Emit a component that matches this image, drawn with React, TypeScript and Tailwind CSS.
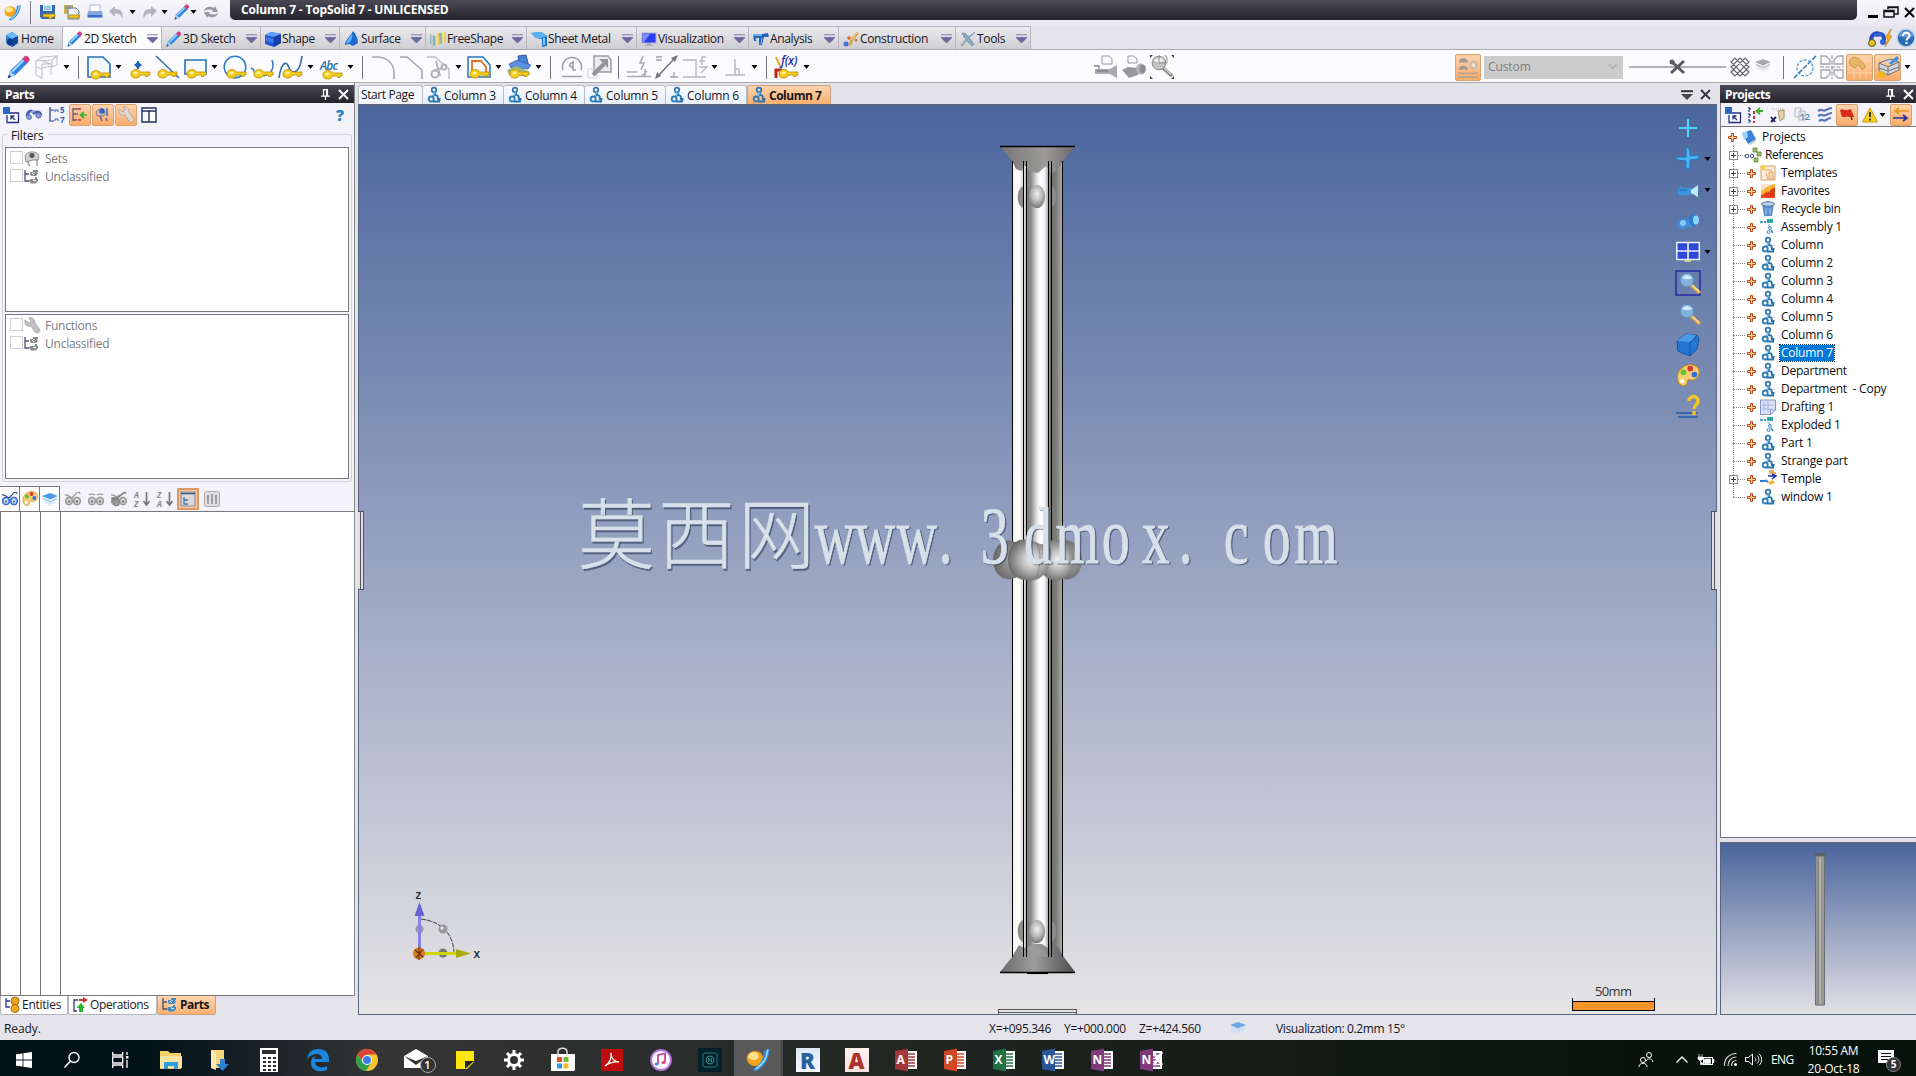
import React from 'react';

type SvgProps = { c?: string; vb?: string; children?: React.ReactNode };

const Svg = ({ c = 'w-6 h-6', vb = '0 0 24 24', children }: SvgProps) => (
  <svg className={`${c} shrink-0 overflow-visible`} viewBox={vb} fill="none">
    {children}
  </svg>
);

const S16 = ({ c = 'w-4 h-4', children }: SvgProps) => (
  <Svg c={c} vb="0 0 16 16">{children}</Svg>
);

/* ---------- small shared drawings ---------- */

const Arrow = ({ c = '' }: { c?: string }) => (
  <svg className={`w-[7px] h-1 shrink-0 ${c}`} viewBox="0 0 7 4">
    <path d="M0.5 0h6L3.5 4z" fill="#000" />
  </svg>
);

const Sep = ({ c = '' }: { c?: string }) => <div className={`w-px h-[23px] shrink-0 bg-[#77777c] ${c}`} />;

const Key = ({ x = 4, y = 14 }: { x?: number; y?: number }) => (
  <g transform={`translate(${x} ${y})`}>
    <path d="M0 5C0 1.5 3 .5 5 .5 7.500.5 9 2 9.500 3H19v3h-2v1.500h-2.500V6H9.500C9 8 7 9 5 9 2 9 0 8 0 5z" fill="#f5cc1a" stroke="#b98d06" strokeWidth=".8" />
    <ellipse cx="4.500" cy="4" rx="2.200" ry="1.500" fill="#fff3a0" />
  </g>
);

const Pencil = ({ c = 'w-4 h-4' }: { c?: string }) => (
  <S16 c={c}>
    <path d="M.5 15.500L2 10.500 11 2l3 3-8.500 8.500z" fill="#2f86e0" />
    <path d="M3 10.500l8-8 1 1-8 8z" fill="#a4d8ff" />
    <path d="M10 2.500L12 .6c1-.8 4 1.800 3 3L13.200 5.500z" fill="#d8387e" />
    <path d="M.5 15.500L2 10.500l1.200.4.3 1.400 1.300.4.200 1.200z" fill="#9fd3f2" />
    <path d="M.5 15.500l.8-2.300 1.500 1.500z" fill="#1d2c68" />
  </S16>
);

const Part = ({ c = 'w-4 h-4' }: { c?: string }) => (
  <S16 c={c}>
    <circle cx="8" cy="3" r="2.300" stroke="#2b74b2" strokeWidth="1.700" />
    <path d="M8.500 5v4" stroke="#3b92cf" strokeWidth="3.200" />
    <circle cx="5.200" cy="12" r="2.500" stroke="#2f80bd" strokeWidth="1.900" />
    <path d="M6.500 9c4-2 6 0 5 2.500M7 14.500h6l.5-2.500H11" stroke="#2873ae" strokeWidth="1.900" />
    <path d="M8 5.500L7.500 9" stroke="#9ad0f2" strokeWidth="1" />
  </S16>
);

const TopSolid = ({ c = 'w-4 h-4' }: { c?: string }) => (
  <S16 c={c}>
    <ellipse cx="6" cy="7" rx="5.500" ry="5" fill="#f5a21c" />
    <ellipse cx="5" cy="5.500" rx="3.500" ry="2.600" fill="#ffe28a" />
    <path d="M15.500.5c.5 5-2.500 12-9 15-1.500 0-2-1-1-2C10 11 12 6 12 2z" fill="#2f8fdc" />
    <path d="M14.500 1c-.5 5-3 10-8 13" stroke="#a5dafa" strokeWidth="1" />
  </S16>
);

const CloseX = ({ color = '#fff' }: { color?: string }) => (
  <svg className="w-[11px] h-[11px]" viewBox="0 0 11 11"><path d="M1 1l9 9M10 1l-9 9" stroke={color} strokeWidth="1.900" /></svg>
);

const Pin = () => (
  <svg className="w-[9px] h-[11px]" viewBox="0 0 9 11"><path d="M2.500 7V.7h4V7M5.500.5V7M0 7.200h9M4.500 7v4" stroke="#fff" fill="none" strokeWidth="1.200" /></svg>
);

const TreeMini = ({ color }: { color: string }) => (
  <S16>
    <path d="M1 1v11h4M1 5h4" stroke="#4a5070" strokeWidth="1.300" />
    <path d="M6 3h7l1 2-2 2H7L6 5zM6 10h8v2l-2 2.500H7L5 12z" fill={color} />
    <path d="M8 4l2 2M9 11l3 1M10 1v3M8 9l4-1" stroke="#fff" strokeWidth="1" />
    <path d="M9 2h5M12 8v3" stroke={color} strokeWidth="2" />
  </S16>
);

const Goggles = ({ gray, variant = 0 }: { gray?: boolean; variant?: number }) => (
  <S16>
    <path d={variant === 1 ? 'M1 4c2-2 4-1 6 0M9 4c2-1 4-2 6 0' : 'M0 4c3-1 4 2 7 3l3-3c2-4 5-3 5-1'} stroke={gray ? '#8a8a8a' : '#24398e'} strokeWidth="1.100" />
    <ellipse cx="4" cy="10" rx="3.600" ry="4" fill={gray ? '#b4b4b4' : '#6d9bf4'} stroke={gray ? '#929292' : '#3060cc'} />
    <ellipse cx="12" cy="10" rx="3.600" ry="4" fill={gray ? '#b4b4b4' : '#6d9bf4'} stroke={gray ? '#929292' : '#3060cc'} />
    <ellipse cx="4" cy="10" rx="2" ry="2.600" fill={gray ? '#d9d9d9' : '#d5e8ff'} />
    <ellipse cx="12" cy="10" rx="2" ry="2.600" fill={gray ? '#d9d9d9' : '#d5e8ff'} />
    <circle cx="4" cy="10.500" r=".9" fill="#444" />
    <circle cx="12" cy="10.500" r=".9" fill="#444" />
    {variant === 2 && <path d="M0 7l5 1 10-7M1 8h7v6l-4 1z" stroke="#7d7d7d" fill="#999" />}
  </S16>
);

const Palette = ({ c = 'w-4 h-4' }: { c?: string }) => (
  <S16 c={c}>
    <path d="M1 9C1 4 5 .5 10 .5c4 0 5.800 3 5.500 5.500-.4 4-4 5-6 4.500-2-.4-2 1-2 2C7 15.500 1 15.500 1 9z" fill="#f6cf72" stroke="#c48a25" strokeWidth=".7" />
    <circle cx="5" cy="5.500" r="1.900" fill="#5fc22e" />
    <circle cx="9.500" cy="3" r="1.900" fill="#d63434" />
    <circle cx="12.300" cy="7" r="1.900" fill="#2f6be0" />
    <circle cx="4.200" cy="11.500" r="1.400" fill="#fff" />
  </S16>
);

const Layer = ({ color = '#4f97e8', light = '#a9d2fb' }: { color?: string; light?: string }) => (
  <S16>
    <path d="M1 9l7 3 7-3-1 3-6 3-6-3z" fill={light} opacity=".35" />
    <path d="M0 5l8-3 8 3-8 3.500z" fill={color} />
    <path d="M1 6.500l7 3 7-3v2L8 12 1 8.500z" fill={light} />
  </S16>
);

const Magnifier = ({ gray }: { gray?: boolean }) => (
  <g>
    <path d="M13 13l9 8" stroke={gray ? '#888' : '#e0a544'} strokeWidth="3.600" />
    <path d="M14 13l7 6.500" stroke={gray ? '#d0d0d0' : '#ffe4a4'} strokeWidth="1.300" />
    <circle cx="9" cy="8" r="6.800" fill={gray ? '#c2c2c2' : '#81b2da'} stroke={gray ? '#8a8a8a' : '#5d8cb9'} />
    <path d="M4 6c2-4 8-4 10 0-3 1.500-6 2-10 0z" fill={gray ? '#eee' : '#d2ebfa'} />
  </g>
);

const PanelBtn = () => (
  <S16>
    <path d="M4 6h11.500v9.500H4V8" stroke="#232e80" strokeWidth="1.300" fill="#fff" />
    <rect x="0" y="0" width="7" height="7" fill="#2a68c8" />
    <path d="M12 13L8 9m0 3.500V9h3.500" stroke="#232e80" strokeWidth="1.300" />
  </S16>
);

const Binoc = () => (
  <S16>
    <path d="M1 9C2 3 6 3 8 6c3-2 6-1 7 2" stroke="#4560ac" strokeWidth="3" />
    <circle cx="3" cy="10" r="2.500" fill="#8a9acb" stroke="#4560ac" strokeWidth=".7" />
    <circle cx="12.500" cy="8.500" r="2.700" fill="#8a9acb" stroke="#4560ac" strokeWidth=".7" />
    <path d="M5 5l4-1" stroke="#9eb3e4" strokeWidth="2" />
  </S16>
);

const HOT = 'flex shrink-0 items-center justify-center border border-[#d9a070] bg-linear-to-b from-[#fdd3ab] to-[#f9ac68] rounded-[2px]';

/* ---------- title bar ---------- */

const TitleBar = () => (
  <div className="flex h-[26px] shrink-0 bg-linear-to-b from-[#f8f8fb] to-[#e9e8f2]">
    <div className="flex w-[230px] h-6 items-center">
      <TopSolid c="w-[17px] h-[17px] ml-1" />
      <Sep c="ml-[9px]" />
      <S16 c="w-4 h-4 ml-[9px]">
        <path d="M0 1h15v14H2L0 13z" fill="#3568b4" />
        <path d="M3 1h9v6H3z" fill="#d6eafa" /><path d="M4 3h7M4 5h7" stroke="#6aa0d3" />
        <path d="M3 10h12v3h-3v2H9v-2H3z" fill="#f3c91d" stroke="#9d7a0a" strokeWidth=".7" />
      </S16>
      <S16 c="w-4 h-4 ml-2">
        <path d="M0 1h9v9H0z" fill="#c9b24b" /><path d="M4 4h8l3 3v8H4z" fill="#e8eef3" stroke="#6d7c86" />
        <path d="M1 2h6v3H1z" fill="#8796a0" /><path d="M5 11h10v3H5z" fill="#f3c91d" stroke="#9d7a0a" strokeWidth=".7" />
      </S16>
      <S16 c="w-4 h-4 ml-[7px]">
        <path d="M3 1h10v7H3z" fill="#fff" stroke="#9fb6dc" />
        <path d="M1 7h14l1 5-1 2H1l-1-2z" fill="#87a5e0" /><path d="M1 11h14v2H1z" fill="#3e6bc5" />
      </S16>
      <S16 c="w-4 h-4 ml-1.5"><path d="M0 7l6-5v3c6 0 9 3 7 10-.5-4-3-5.500-7-5.500V13z" fill="#b4b4ba" /></S16>
      <Arrow c="ml-1" />
      <S16 c="w-4 h-4 ml-[5px]"><path d="M16 7l-6-5v3C4 5 1 8 3 15c.5-4 3-5.500 7-5.500V13z" fill="#b4b4ba" /></S16>
      <Arrow c="ml-1" />
      <div className="ml-1.5"><Pencil /></div>
      <Arrow c="" />
      <S16 c="w-4 h-4 ml-1.5">
        <path d="M1 7c1-5 7-5 10-3l1-2 3 6H9l1-1.500C7 5 4 5 1 7zM15 9c-1 5-7 5-10 3l-1 2-3-6h6l-1 1.500c3 1.500 6 1.500 9-.5z" fill="#98989f" />
      </S16>
    </div>
    <div className="flex h-5 w-[1627px] bg-linear-to-b from-[#4b4955] to-[#25232c] rounded-b-[5px] pl-[11px]">
      <span className="text-white text-xs font-bold leading-5 tracking-[-0.17px] whitespace-nowrap">Column 7 - TopSolid 7 - UNLICENSED</span>
    </div>
    <div className="flex items-center pl-[11px] gap-[5px] -mt-[2px]">
      <svg className="w-[10px] h-[14px]" viewBox="0 0 10 14"><path d="M0 11.500h10" stroke="#000" strokeWidth="3" /></svg>
      <svg className="w-4 h-3" viewBox="0 0 16 12"><path d="M5 3V1h10v7h-4M1 4.500h10V11H1zM1 5.500h10M5 1.500h10" stroke="#111" fill="none" strokeWidth="1.500" /></svg>
      <CloseX color="#000" />
    </div>
  </div>
);

/* ---------- ribbon tabs ---------- */

const CubeIcon = () => (
  <S16>
    <path d="M0 4l6-3 10 2v9l-7 4-9-3z" fill="#1f57cf" />
    <path d="M0 4l6-3 10 2-7 3z" fill="#62a2ff" /><path d="M9 6l7-3v9l-7 4z" fill="#1840a8" /><path d="M1 6l7 2v4l-7-2z" fill="#3e7cf0" />
  </S16>
);

const ribbon = [
  { n: 'Home', w: 'w-[63px]', i: <S16><path d="M2 4l6-3 6 4v7l-6 4-6-4z" fill="#2c7ed4" /><path d="M2 4l6-3 6 4-6 3z" fill="#6fbaf5" /><path d="M8 8l6-3v7l-6 4z" fill="#11479a" /><ellipse cx="6" cy="11" rx="3" ry="3.500" fill="#0d3a8a" /></S16> },
  { n: '2D Sketch', w: 'w-[99px]', i: <Pencil /> },
  { n: '3D Sketch', w: 'w-[99px]', i: <Pencil /> },
  { n: 'Shape', w: 'w-[79px]', i: <CubeIcon /> },
  { n: 'Surface', w: 'w-[86px]', i: <S16><path d="M9 0c3 3 5 8 5 12l-5 3-4-2-4 1c0-5 5-8 8-14z" fill="#1c68cf" /><path d="M8 2c-2 5-5 6-6 11l4-2c2-3 3-5 2-9z" fill="#5ab2fa" /></S16> },
  { n: 'FreeShape', w: 'w-[101px]', i: <S16><path d="M0 3l5 2 4-3 7-1v10l-5 1-4 3-7-2z" fill="#e7cd55" /><path d="M0 3l5 2v10l-5-2zM9 2l3 .5V12l-2 1z" fill="#74a6d8" opacity=".8" /><path d="M2 3v11M7 4v11M13 1v11" stroke="#fff" strokeWidth=".8" /></S16> },
  { n: 'Sheet Metal', w: 'w-[110px]', i: <S16><path d="M0 2l10-1 6 4v10l-5 1V8L5 7z" fill="#1f74cf" /><path d="M0 2l10-1 6 4-5 2-6 0z" fill="#58b3f3" /><path d="M13 7v7" stroke="#7cc8f9" strokeWidth="2" /></S16> },
  { n: 'Visualization', w: 'w-[112px]', i: <S16><rect x="1" y="2" width="14" height="10" fill="#293ef0" stroke="#aab4d8" /><path d="M2 3h7L3 11H2z" fill="#7a8cff" /><path d="M6 12h4v2H6zM4 14h8v1H4z" fill="#a1a6b8" /></S16> },
  { n: 'Analysis', w: 'w-[90px]', i: <S16><path d="M0 3h9l6-1 1 4h-5l-2 8H6V7H3v3H1z" fill="#2367bd" /><path d="M0 3h9v2H0z" fill="#65aff0" /><path d="M3 8l1 3M9 7l-1 6" stroke="#8ac6f6" /></S16> },
  { n: 'Construction', w: 'w-[117px]', i: <S16><path d="M5 15l3-8 6-6 2 2-6 6-1 5z" fill="#d7a24a" /><circle cx="3" cy="13" r="2.500" fill="#4371d7" /><circle cx="6" cy="7" r="1.800" fill="#d86a2b" /><path d="M8 9l6-7" stroke="#ffe19c" /><circle cx="13" cy="9" r="1.500" fill="#bf7f35" /></S16> },
  { n: 'Tools', w: 'w-[75px]', i: <S16><path d="M2 2l4 1 8 10-2 2L4 6z" fill="#8bb0cb" stroke="#53798f" strokeWidth=".6" /><path d="M15 1L8 8l-6 7-1-1 6-7z" fill="#b9c9d2" stroke="#5b7f92" strokeWidth=".6" /></S16> },
];

const Ribbon = () => (
  <div className="flex h-[23px] shrink-0 bg-[#e5e4ec]">
    {ribbon.map((t, i) => (
      <div
        key={t.n}
        className={`${t.w} flex items-center shrink-0 h-full pl-[4px] pt-px border-t border-r border-[#b5b5bb] ${i === 1 ? 'bg-[#fcfcff]' : 'bg-linear-to-b from-[#ebebef] to-[#cdcdd2]'}`}
      >
        {t.i}
        <span className="ml-px text-xs leading-4 tracking-[-0.34px] whitespace-nowrap text-[#16161a]">{t.n}</span>
        {i > 0 && (
          <svg className="ml-auto mr-[3px] w-[11px] h-[9px]" viewBox="0 0 11 9"><path d="M0 .8h11M0 3.500h11L5.500 9z" fill="#6d67a0" stroke="#6d67a0" strokeWidth=".8" /></svg>
        )}
      </div>
    ))}
    <div className="ml-auto flex items-center gap-1">
      <svg className="w-6 h-5" viewBox="0 0 24 20">
        <path d="M3 13C3 6 8 4 12 6c3 0 4 2 4 6" stroke="#2549c4" strokeWidth="4" fill="none" />
        <path d="M5 6l8-2 3 4-8 1z" fill="#3560d8" />
        <circle cx="4" cy="15" r="3.500" fill="#e2c02c" stroke="#5b5b2a" /><circle cx="15" cy="14" r="3" fill="#3560d8" />
        <path d="M23 1l-6 9h3l-3 9 7-11h-3z" fill="#f8b21b" stroke="#c17d0d" strokeWidth=".7" />
      </svg>
      <svg className="w-[20px] h-5" viewBox="0 0 20 20">
        <circle cx="10" cy="10" r="9" fill="#2c69b5" stroke="#c4d4e8" strokeWidth="1.500" />
        <path d="M2 8a8.500 8.500 0 0 1 16 0c-5 2-11 2-16 0z" fill="#79aee2" opacity=".6" />
        <path d="M7 8c0-4 6.500-4 6.500-.5 0 2.500-3 2.500-3 5M10.500 14v2" stroke="#fff" strokeWidth="2.200" fill="none" />
      </svg>
    </div>
  </div>
);

/* ---------- main toolbar ---------- */

const Toolbar = () => (
  <div className="flex h-[34px] shrink-0 items-center border-y border-[#a9a9ae] bg-[#fcfcff] pt-[2px]">
    <div className="ml-[7px] shrink-0"><Pencil c="w-6 h-6" /></div>
    <Svg c="w-6 h-6 ml-1"><path d="M1 6l6-4 15-1-5 4zM1 6v14l6 3V9M7 9h9l-9-3M7 13l9-2v9M1 12l6 2M17 5v7l5-2V1" stroke="#c4c4c8" strokeWidth="1.100" /></Svg>
    <Arrow c="ml-1" /><Sep c="ml-2" />
    <Svg c="w-6 h-6 ml-2"><path d="M1 22V2h15l7 7v13z" stroke="#2b71b5" strokeWidth="1.600" fill="#f2f8fe" /><Key x={4} y={15} /></Svg>
    <Arrow c="ml-1" />
    <Svg c="w-6 h-6 ml-[7px]"><path d="M9 6v8M5.500 10h7" stroke="#2266c0" strokeWidth="2" /><path d="M7 8l4 4M11 8l-4 4" stroke="#2266c0" strokeWidth="1.200" /><Key x={2} y={14} /></Svg>
    <Svg c="w-6 h-6 ml-0.5"><path d="M1 1l23 22" stroke="#3f71b5" strokeWidth="1.600" /><Key x={3} y={14} /></Svg>
    <Svg c="w-6 h-6 ml-[5px]"><path d="M1 5h21v14H1z" stroke="#2b71b5" strokeWidth="1.600" fill="#f6faff" /><Key x={3} y={14} /></Svg>
    <Arrow c="ml-[3px]" />
    <Svg c="w-6 h-6 ml-[5px]"><circle cx="12" cy="12" r="10.800" stroke="#2f7fc5" strokeWidth="1.500" /><Key x={4} y={14} /></Svg>
    <Svg c="w-6 h-6 ml-1"><path d="M0 13l2 1c3 8 10 8 15 5 5-3 6-8 4-14" stroke="#3a79bd" strokeWidth="1.500" /><Key x={3} y={14} /></Svg>
    <Svg c="w-6 h-6 ml-1"><path d="M0 23C2 9 6 7 8 9s3 9 7 8c5-1 7-8 8-16" stroke="#2f6cb0" strokeWidth="1.600" /><Key x={4} y={14} /></Svg>
    <Arrow c="ml-1" />
    <div className="ml-1.5 w-6 h-6 shrink-0 relative">
      <span className="absolute left-0 top-[3px] italic font-semibold text-[12px] leading-[16px] text-[#2f6eaa] tracking-[-0.8px]">Abc</span>
      <Svg c="w-6 h-6 relative"><Key x={3} y={15} /></Svg>
    </div>
    <Arrow c="ml-[3px]" /><Sep c="ml-2" />
    <Svg c="w-6 h-6 ml-2"><path d="M1 2h6c9 1 16 6 16 16v6" stroke="#a7a7aa" strokeWidth="1.600" /></Svg>
    <Svg c="w-6 h-6 ml-1"><path d="M1 2h7l15 13v9" stroke="#a7a7aa" strokeWidth="1.600" /></Svg>
    <Svg c="w-6 h-6 ml-1"><path d="M0 2h8l14 12v10" stroke="#bcbcc0" strokeWidth="1.400" /><circle cx="8" cy="19" r="3.500" stroke="#b4b4b8" strokeWidth="2" /><circle cx="17" cy="12" r="2.500" stroke="#b4b4b8" strokeWidth="2" /><path d="M9 6l4 15M6 16l10-3" stroke="#b4b4b8" strokeWidth="2" /></Svg>
    <Arrow c="ml-1" />
    <Svg c="w-6 h-6 ml-[5px]"><path d="M1 22V2h15l7 8v12z" stroke="#2b71b5" strokeWidth="1.500" /><path d="M5 18V6h9l5 6v8" stroke="#e06d24" strokeWidth="1.800" /><Key x={3} y={14} /></Svg>
    <Arrow c="ml-1" />
    <Svg c="w-6 h-6 ml-[5px]"><path d="M11 1l8-1 3 12-9 1z" fill="#4b82db" stroke="#2c55a5" /><path d="M2 9l8-4 14 5-3 4-17-1z" fill="#5c8ee2" stroke="#2c55a5" strokeWidth=".7" /><path d="M0 15l9-4 14 6-5 4-16-1z" fill="#9cbd72" /><Key x={3} y={14} /></Svg>
    <Arrow c="ml-1" /><Sep c="ml-2" />
    <Svg c="w-6 h-6 ml-[9px]"><path d="M3 15a9.500 9.500 0 1 1 18 0M2 21.500h20M13 8h-2c-3 3 0 5 2 3M13 6v9h3" stroke="#a0a0a4" strokeWidth="1.600" /></Svg>
    <Svg c="w-6 h-6 ml-1"><path d="M6 1h14l3 4v12H6z" fill="#ececef" stroke="#9c9ca0" strokeWidth="1.500" /><path d="M0 14h9v9H0z" stroke="#d4d4d8" /><path d="M5 20L16 9" stroke="#949498" strokeWidth="4" /><path d="M11 4h9v9z" fill="#949498" /></Svg>
    <Sep c="ml-1.5" />
    <Svg c="w-6 h-6 ml-2"><path d="M0 17h10M0 21.500h24M18 14v8M14 22l6-6M16 1l-3 7h4l-3 7" stroke="#acacb0" strokeWidth="1.600" /></Svg>
    <Svg c="w-6 h-6 ml-1"><path d="M2 22L20 3" stroke="#77777b" strokeWidth="1.700" /><path d="M23 0l-7 3 4 4zM0 24l2-7 4 4z" fill="#77777b" /><path d="M1 2h6M1 5h6M15 22h8M19 17v5" stroke="#a0a0a4" strokeWidth="1.300" /></Svg>
    <Svg c="w-6 h-6 ml-1"><path d="M0 5h13v17h10M0 22h14M23 2h-4v8M16 12h8l-6 6M16 6h6" stroke="#b8b8bc" strokeWidth="1.400" /></Svg>
    <Arrow c="ml-1" />
    <Svg c="w-6 h-6 ml-1.5"><path d="M1 20h20M11 4v16M15 14v6M11 14h4" stroke="#b8b8bc" strokeWidth="1.500" /></Svg>
    <Arrow c="ml-[3px]" /><Sep c="ml-2" />
    <div className="ml-2 w-6 h-6 shrink-0 relative">
      <Svg><path d="M1 2l5 11" stroke="#e0a82c" strokeWidth="2" /><path d="M1 23v-8h6" stroke="#b52a1d" strokeWidth="3" /><Key x={4} y={14} /></Svg>
      <span className="absolute left-[6px] -top-[3px] italic font-semibold text-[12px] leading-[18px] text-[#2a2fa0] tracking-[-0.4px]">f(x)</span>
    </div>
    <Arrow c="ml-1" />

    <Svg c="w-6 h-6 ml-[284px]"><path d="M8 9V1h7l3 3v5z" stroke="#98989c" /><path d="M1 14h15l7-4v13l-7-4H1z" fill="#a9a9ad" /><path d="M0 11h5v3M3 16h11" stroke="#88888c" strokeWidth="1.300" /></Svg>
    <Svg c="w-6 h-6 ml-1"><path d="M6 8V1h6l3 3v4z" stroke="#98989c" /><path d="M0 15l6-3 10 1v7l-9 3z" fill="#98989c" /><ellipse cx="19" cy="14" rx="5" ry="5.500" fill="#b3b3b7" /><ellipse cx="20.500" cy="14" rx="3" ry="4" fill="#8d8d91" /></Svg>
    <Svg c="w-6 h-6 ml-1"><path d="M0 0h3L0 3zM24 0h-3l3 3zM0 24h3l-3-3zM24 24h-3l3-3z" fill="#444" /><Magnifier gray /><path d="M9 0v8h8V3l-2-3" stroke="#909094" strokeWidth="1" /></Svg>

    <div className={`${HOT} w-[26px] h-[27px] ml-[281px]`}>
      <Svg c="w-[22px] h-[22px]"><path d="M2 7c0-6 10-6 10 0zM2 15c0-6 10-6 10 0z" fill="#a09a96" /><circle cx="18" cy="10" r="5" fill="#cdbfb0" /><circle cx="18" cy="10" r="2" fill="#f3e2d0" /><path d="M1 19h22M1 23h22" stroke="#b9a38f" strokeWidth="2" /></Svg>
    </div>
    <div className="ml-[3px] w-[139px] h-[23px] shrink-0 bg-[#cccccd] flex items-center pl-1 pr-1.5 justify-between">
      <span className="text-xs tracking-[-0.1px] text-[#7c7c80]">Custom</span>
      <svg className="w-[9px] h-[6px]" viewBox="0 0 9 6"><path d="M.5.5l4 4 4-4" stroke="#a8a8ac" fill="none" strokeWidth="1.200" /></svg>
    </div>
    <Svg c="w-[97px] h-[16px] ml-1.5" vb="0 0 97 16"><path d="M0 8h97" stroke="#66666a" strokeWidth="1.200" /><path d="M42 2l13 12M55 2L42 14" stroke="#5a5a5e" strokeWidth="3" /><circle cx="43" cy="3" r="2.500" fill="#5a5a5e" /></Svg>
    <Svg c="w-[18px] h-[18px] ml-[5px]" vb="0 0 18 18"><path d="M0 4l4-4 14 14-4 4L0 4zM9 0l9 9-9 9L0 9 9 0zM14 0l4 4L4 18l-4-4z" stroke="#66666a" strokeWidth="1.200" /></Svg>
    <div className="ml-1.5 shrink-0 -mt-1"><Layer color="#a8a8ae" light="#cacad0" /></div>
    <Sep c="ml-3" />
    <Svg c="w-6 h-6 ml-[9px]"><path d="M1 23L23 1" stroke="#2e7cbc" strokeWidth="1.500" strokeDasharray="5 1.500" /><circle cx="12" cy="13" r="8" stroke="#4f9bd0" strokeWidth="1.300" strokeDasharray="3 1.500" /></Svg>
    <Svg c="w-6 h-6 ml-[3px]"><path d="M1 1h5l4 4v4H1zM23 1h-5l-4 4v4h9zM1 23h5l4-4v-4H1zM23 23h-5l-4-4v-4h9z" stroke="#a4a4a8" strokeWidth="1.300" /><path d="M12 0v24M0 12h24" stroke="#909094" strokeDasharray="4 1.500" /></Svg>
    <div className={`${HOT} w-[27px] h-[27px] ml-0.5`}>
      <Svg><path d="M0 6h24M0 12h24M0 18h24M6 0v24M12 0v24M18 0v24" stroke="#fbd6ad" /><path d="M2 5c3-5 9-3 13 3l3 4-4 2-4-4-3 3C3 12 0 8 2 5z" fill="#e8b466" stroke="#c58c42" strokeWidth=".8" /></Svg>
    </div>
    <div className={`${HOT} w-[27px] h-[27px] ml-px`}>
      <Svg><path d="M3 8l11-4 9 3-11 5zM3 8v8l9 4 11-5V7" stroke="#6d7078" fill="#d3d5db" /><path d="M12 12v8M3 13l9 3 11-4" stroke="#6d7078" /><path d="M21 1l-8 7 2 2 8-6z" fill="#3e8ddb" /><path d="M1 22c0-7 6-8 8-3v4z" fill="#f3b61c" /></Svg>
    </div>
    <Arrow c="ml-[3px]" />
  </div>
);

/* ---------- left panel ---------- */

const PanelHeader = ({ title, c = '' }: { title: string; c?: string }) => (
  <div className="flex h-[18px] shrink-0 items-center bg-linear-to-b from-[#4a4853] to-[#25232c] pl-[5px]">
    <span className="text-white text-xs font-bold leading-[17px] tracking-[-0.4px]">{title}</span>
    <div className={`ml-auto flex items-center gap-2 ${c}`}><Pin /><CloseX /></div>
  </div>
);

const filterRow = (label: string, icon: React.ReactNode) => (
  <div className="flex items-center h-[18px]">
    <div className="w-[13px] h-[13px] border border-[#cfcfd2] bg-white -mt-[3px]" />
    <div className="ml-px">{icon}</div>
    <span className="ml-[5px] text-xs tracking-[-0.24px] text-[#7c7c7f]">{label}</span>
  </div>
);

const SetsIcon = <S16><path d="M1 5c2-5 12-6 14 0l-1 4H9l-7 2z" fill="#d0d0d3" stroke="#959598" /><circle cx="8" cy="4.500" r="2.500" fill="#555558" /><path d="M5 10l-1 2 2 3M13 8v7" stroke="#a0a0a3" strokeWidth="1.500" /></S16>;
const Wrench = ({ color = '#c0c0c3' }: { color?: string }) => <S16><path d="M1 2l4 3 2-2-2-3c3-1 6 1 6 5l5 7c0 3-3 4-5 2L7 8C3 9 0 6 1 2z" fill={color} stroke="#9c9793" strokeWidth=".7" /></S16>;

const LeftPanel = () => (
  <div className="flex flex-col w-[355px] shrink-0 pt-0.5 bg-[#f4f3f9] border-r border-[#85858c]">
    <PanelHeader title="Parts" c="mr-[5px]" />
    <div className="flex h-6 shrink-0 items-center">
      <div className="ml-[3px]"><PanelBtn /></div>
      <div className="ml-[7px]"><Binoc /></div>
      <div className="ml-[7px] w-[17px] h-4 relative">
        <S16><path d="M1 0v14h4M1 3h4" stroke="#2a3a80" strokeWidth="1.200" /><path d="M6 5V3h3v2M6 14v-2h3v2" stroke="#2a60b8" /></S16>
        <span className="absolute left-[11px] -top-[1px] text-[8px] leading-[8px] font-bold text-[#2a60b8]">5</span>
        <span className="absolute left-[11px] top-[9px] text-[8px] leading-[8px] font-bold text-[#2a60b8]">7</span>
      </div>
      <div className={`${HOT} w-[22px] h-[22px] ml-[3px]`}><S16><path d="M1 1v13M1 2h5M1 7h5M1 13h4" stroke="#6c5a78" strokeWidth="1.300" /><path d="M6 2h3M6 13h3" stroke="#d03030" strokeWidth="1.500" /><path d="M15 8H9m3-3L8.500 8 12 11" stroke="#3fae2c" strokeWidth="1.700" /></S16></div>
      <div className={`${HOT} w-[22px] h-[22px] ml-px`}><S16><path d="M1 5c2-4 8-4 9 0l-1 4H2z" fill="#cdb8ba" stroke="#9c8480" /><circle cx="7" cy="4" r="2.700" fill="#2d60c9" /><path d="M12 1v8" stroke="#5a78b8" strokeWidth="1.800" /><path d="M5 9l2 5M11 11l1 3" stroke="#7d6f88" strokeWidth="1.800" /></S16></div>
      <div className={`${HOT} w-[22px] h-[22px] ml-px`}><Wrench color="#e0d6ce" /></div>
      <S16 c="w-4 h-4 ml-1"><path d="M1 1h14v14H1zM1 4h14M8 4v11" stroke="#222c60" strokeWidth="1.400" fill="#fff" /></S16>
      <span className="ml-auto mr-[10px] text-[16px] leading-4 font-extrabold text-[#2c86c8]">?</span>
    </div>
    <div className="relative mx-0.5 mt-[7px] h-[348px] shrink-0 rounded-[2px] border border-[#d2d1d8] pt-3 px-0.5 flex flex-col gap-0.5">
      <span className="absolute left-[4px] -top-[7px] px-1 bg-[#f4f3f9] text-xs leading-4 tracking-[-0.2px] text-[#16161a]">Filters</span>
      <div className="h-[165px] w-[344px] border border-[#77777c] bg-white pl-1 pt-[2px]">
        {filterRow('Sets', SetsIcon)}
        {filterRow('Unclassified', <TreeMini color="#8b8b8e" />)}
      </div>
      <div className="h-[165px] w-[344px] border border-[#77777c] bg-white pl-1 pt-[2px]">
        {filterRow('Functions', <Wrench />)}
        {filterRow('Unclassified', <TreeMini color="#8b8b8e" />)}
      </div>
    </div>
    <div className="flex h-[25px] mt-1 shrink-0 items-center">
      {[<Goggles />, <Palette />, <Layer />].map((ic, i) => (
        <div key={i} className="w-5 h-full border-t border-r border-[#77777c] bg-white flex items-center justify-center pl-px">{ic}</div>
      ))}
      <div className="ml-[5px]"><Goggles gray /></div>
      <div className="ml-[7px]"><Goggles gray variant={1} /></div>
      <div className="ml-[7px]"><Goggles gray variant={2} /></div>
      {[['A', 'Z'], ['Z', 'A']].map(([a, b]) => (
        <div key={a} className="ml-[7px] w-4 flex items-center">
          <div className="w-[9px] flex flex-col text-[8px] leading-[9px] font-bold italic text-[#88888b]"><span>{a}</span><span>{b}</span></div>
          <svg className="w-[7px] h-4" viewBox="0 0 7 16"><path d="M3.500 1v13M.5 10l3 4 3-4" stroke="#77777a" strokeWidth="1.700" fill="none" /></svg>
        </div>
      ))}
      <div className="ml-[4px] w-[22px] h-[22px] border-2 border-[#dd9a66] bg-[#f9c9a0] flex items-center justify-center"><S16><path d="M1 1h14v14H1z" fill="#ddd8d8" stroke="#8a8f9f" strokeWidth="1.200" /><path d="M1 2.500h14" stroke="#46588a" strokeWidth="1.600" /><path d="M4 6v7h4M4 9h4" stroke="#3c78b0" strokeWidth="1.300" /></S16></div>
      <S16 c="w-4 h-4 ml-[5px]"><rect x=".5" y=".5" width="15" height="15" rx="2" fill="#e0e0e2" stroke="#a8a8ab" /><path d="M4 4v9M8 3v10M12 4v9M3 6h2M7 9h2M11 5h2" stroke="#8d8d90" strokeWidth="1.500" /></S16>
    </div>
    <div className="flex h-[485px] shrink-0 border border-r-0 border-[#77777c] bg-white">
      <div className="w-5 border-r border-[#77777c]" />
      <div className="w-5 border-r border-[#77777c]" />
      <div className="w-5 border-r border-[#77777c]" />
    </div>
    <div className="flex h-[19px] shrink-0 w-[356px] bg-[#e4e3ea] text-xs leading-[18px] tracking-[-0.25px] text-[#16161a]">
      <div className="w-[68px] flex items-center pl-1 bg-white border border-t-0 border-[#b5b5bb] rounded-b-[3px]">
        <S16><path d="M1 1v9h4M1 4h4" stroke="#2c3a88" strokeWidth="1.300" /><circle cx="10" cy="4" r="4" fill="#f0a620" stroke="#a66c0c" /><circle cx="10" cy="11.500" r="4" fill="#f0a620" stroke="#a66c0c" /></S16>
        <span className="ml-px">Entities</span>
      </div>
      <div className="w-[89px] flex items-center pl-1 bg-white border border-t-0 border-[#b5b5bb] rounded-b-[3px]">
        <S16><path d="M5 3H1v11h3" stroke="#343880" strokeWidth="1.300" /><path d="M6 2h4V0l5 3-5 3V4H6z" fill="#cf2f2f" /><path d="M6 15v-4H3.500L8 6l4 5h-2v4z" fill="#2bb52b" /></S16>
        <span className="ml-px tracking-[-0.4px]">Operations</span>
      </div>
      <div className="w-[59px] flex items-center pl-1 bg-linear-to-b from-[#fdd6b0] to-[#f9b070] border border-t-0 border-[#c9a284] rounded-b-[3px]">
        <TreeMini color="#3f8cc8" />
        <span className="font-bold tracking-[-0.5px] ml-[2px]">Parts</span>
      </div>
    </div>
  </div>
);

/* ---------- 3D viewport ---------- */

const docTabs = ['Column 3', 'Column 4', 'Column 5', 'Column 6'];

const Scene = () => (
  <svg className="absolute inset-0 w-[1359px] h-[911px]" viewBox="358 104 1359 911" fill="none">
    <defs>
      <linearGradient id="shaft" x1="1012" x2="1063" y1="0" y2="0" gradientUnits="userSpaceOnUse">
        <stop offset="0" stopColor="#f2f2ee" /><stop offset=".14" stopColor="#fff" /><stop offset=".21" stopColor="#dcdcda" /><stop offset=".27" stopColor="#c9c9c7" />
        <stop offset=".3" stopColor="#7b7b7b" /><stop offset=".37" stopColor="#8a8a8a" /><stop offset=".5" stopColor="#ececec" /><stop offset=".56" stopColor="#fff" /><stop offset=".64" stopColor="#f2f2f2" />
        <stop offset=".71" stopColor="#a8a8a8" /><stop offset=".76" stopColor="#6d6d68" /><stop offset=".87" stopColor="#7d7d7a" /><stop offset="1" stopColor="#b2b2b0" />
      </linearGradient>
      <linearGradient id="cone" x1="1000" x2="1075" y1="0" y2="0" gradientUnits="userSpaceOnUse">
        <stop offset="0" stopColor="#6a6a6a" /><stop offset=".45" stopColor="#9d9d9d" /><stop offset="1" stopColor="#4d4d4d" />
      </linearGradient>
      <linearGradient id="coneTop" x1="1000" x2="1075" y1="0" y2="0" gradientUnits="userSpaceOnUse">
        <stop offset="0" stopColor="#777775" /><stop offset=".6" stopColor="#9b9a98" /><stop offset="1" stopColor="#6b6a69" />
      </linearGradient>
      <radialGradient id="ball" cx=".5" cy=".4" r=".7"><stop offset="0" stopColor="#f3f3f3" /><stop offset=".5" stopColor="#b4b4b4" /><stop offset="1" stopColor="#5e5e5e" /></radialGradient>
      <radialGradient id="bead" cx=".55" cy=".5" r=".6"><stop offset="0" stopColor="#f4f4f4" /><stop offset=".5" stopColor="#adadad" /><stop offset="1" stopColor="#5c5c5c" /></radialGradient>
      <radialGradient id="beadEdge" cx=".6" cy=".5" r=".6"><stop offset="0" stopColor="#a8a8a8" /><stop offset="1" stopColor="#666" /></radialGradient>
    </defs>

    <rect x="1012" y="161" width="51" height="796" fill="url(#shaft)" />
    <path d="M1000 146h75l-12 15-6 10-6 2-5-7-8 7-7-1-7-7-2 6-6-2-4-8z" fill="url(#coneTop)" />
    <path d="M1012 957l7-12 5 3 5-2 4-2h9l7 5 4-5 5 3 5 9 12 16h-75z" fill="url(#cone)" />
    <path d="M1029 957c2-14 16-14 19 0" fill="#9d9d9d" opacity=".6" />
    <path d="M1023 186c-7 3-7 19 0 22zM1051 186c7 3 7 19 0 22z" fill="#8c8c8c" />
    <path d="M1023 920c-7 3-7 19 0 22zM1051 920c7 3 7 19 0 22z" fill="#8c8c8c" />
    <ellipse cx="1037" cy="196.500" rx="8" ry="11.500" fill="url(#ball)" />
    <ellipse cx="1037" cy="931.500" rx="8" ry="11.500" fill="url(#ball)" />
    <g stroke="#000" strokeWidth="1">
      <path d="M1012.500 161v796M1023.500 161v796M1026.500 161v796M1048.500 161v796M1051.500 161v796M1062.500 161v796" />
      <path d="M1000 146.500h75M1000 972.500h75" strokeWidth="1.300" />
      <path d="M1027 973.300h21" strokeWidth="1.500" />
    </g>
    <ellipse cx="1009" cy="560" rx="16" ry="19.500" fill="url(#beadEdge)" /><ellipse cx="1067" cy="560" rx="15" ry="19.500" fill="url(#beadEdge)" />
    <ellipse cx="1056" cy="560" rx="18" ry="20.500" fill="url(#bead)" />
    <path d="M1008 560c0-13 7-20.500 16-20.500 5 0 9 1 12 3l6 2 5-4c4 5 5 10 4 18-2 13-10 22-20 22-14 0-23-7-23-20.500z" fill="url(#bead)" />
    <path d="M1036 542c6 8 5 28-1 37" stroke="#777" strokeWidth="1" opacity=".6" />

    {/* watermark */}
    <g fill="#1f2a4a" stroke="#1f2a4a" opacity=".55" transform="translate(1.200 1.500)"><Watermark /></g>
    <g fill="#d8e1ea" stroke="#d8e1ea"><Watermark /></g>

    {/* axis triad */}
    <path d="M421 919c17 2 32 12 33 33" stroke="#444" strokeWidth="1" strokeDasharray="5 1" />
    <circle cx="419.500" cy="929" r="4" fill="#9a9aa0" /><circle cx="443" cy="929" r="4.500" fill="#97979a" /><circle cx="442" cy="928" r="1.500" fill="#f1f1f1" /><circle cx="443" cy="953" r="4.500" fill="#77776a" />
    <path d="M419.500 953v-48" stroke="#8683e8" strokeWidth="3" /><path d="M419.500 902l-5 14h10z" fill="#6863d4" />
    <path d="M420 953.500h38" stroke="#d0d400" strokeWidth="3" /><path d="M471 953.500l-15-4.500v9z" fill="#a8ac0a" />
    <circle cx="419" cy="953.500" r="6" fill="#d87a1f" /><path d="M415 950l8 7M423 949l-7 9M419 947v13" stroke="#6a3508" strokeWidth="1.200" />
    <g fill="#2a2a35" fontFamily="Open Sans, sans-serif" fontWeight="600" fontSize="12"><text x="415.500" y="899">z</text><text x="473.500" y="957.500">x</text></g>

    {/* scale */}
    <rect x="1572.500" y="1001.500" width="82" height="9" fill="#f7952b" stroke="#000" /><path d="M1572.500 998v4M1654.500 998v4" stroke="#000" />
    <text x="1595" y="996" fontSize="13" textLength="37" fill="#33333a" fontFamily="Open Sans, sans-serif">50mm</text>
  </svg>
);

const Watermark = () => (
  <>
    <text x="578 658 738" y="563" fontSize="77" fontWeight="300" strokeWidth=".5" fontFamily="'Noto Sans CJK SC', sans-serif">莫西网</text>
    <g transform="scale(.7 1)">
      <text x="1193 1250 1310 1351 1421 1483 1539 1594 1651 1694 1766 1824 1880" y="563" fontSize="80" strokeWidth=".8" textAnchor="middle" fontFamily="'Liberation Serif', serif">www.3dmox.com</text>
    </g>
  </>
);

const viewIcons = [
  { a: false, i: <Svg><path d="M12 3v18M3 12h18" stroke="#4fd2f5" strokeWidth="2.200" /></Svg> },
  { a: true, i: <Svg><path d="M10 1c3-1 4 1 4 8l8-1c2 1 1 4-1 4l-7 1c0 7 0 9-2 9-3 0-2-4-2-8l-8-1c-2-1-2-3 0-3l8 0z" fill="#45b4f0" stroke="#1e6fc0" strokeWidth=".8" /></Svg> },
  { a: true, i: <Svg><path d="M2 10h14v7H2zM2 8h4v2" fill="#3b96dc" /><path d="M15 12l7-5v12l-7-4z" fill="#b9ecfc" /><path d="M3 12h8" stroke="#1d5da8" /></Svg> },
  { a: false, i: <Svg><path d="M1 13l7-4 8 2v6l-9 3-6-2z" fill="#3d8ddf" /><ellipse cx="18" cy="11" rx="5" ry="6" fill="#2f79cf" /><ellipse cx="20" cy="11" rx="3" ry="4.500" fill="#8ed4fa" /><circle cx="7" cy="14" r="3" fill="#8cc8f6" /></Svg> },
  { a: true, i: <Svg><rect x=".8" y="2.500" width="22.500" height="17" fill="#2b48d8" stroke="#e8eefc" strokeWidth="1.500" /><path d="M12 3v16M1 11h22" stroke="#e8eefc" strokeWidth="1.700" /><path d="M9 20h6v2H8z" fill="#cfc9a0" /></Svg> },
  { a: false, i: <Svg><rect x="0" y="0" width="24" height="24" stroke="#2322a4" strokeWidth="1.400" /><g transform="translate(2 1)"><Magnifier /></g></Svg> },
  { a: false, i: <Svg><g transform="translate(2 1)"><Magnifier /></g></Svg> },
  { a: false, i: <Svg><path d="M1 8l9-7 11 1 2 4-2 10-7 7-12-5z" fill="#2478d4" stroke="#14509f" /><path d="M1 8l9-7 11 1-7 7z" fill="#4b9ce8" /><path d="M14 9c2 0 4-3 7-7M14 9v14" stroke="#14509f" /></Svg> },
  { a: false, i: <Palette c="w-6 h-6" /> },
  { a: false, i: <Svg><path d="M0 18h22M2 22h20" stroke="#1c5eab" strokeWidth="1.500" /><path d="M13 6c0-6 9-6 9 0 0 4-4 4-4 8M18 16v4" stroke="#f6c521" strokeWidth="3.300" /></Svg> },
];

const Viewport = () => (
  <div className="flex flex-col w-[1359px] shrink-0">
    <div className="flex h-[21px] shrink-0 bg-[#e3e2e8] pt-0.5 text-xs leading-[17px] text-[#16161a]">
      <div className="w-[65px] pl-[2px] border border-b-0 border-[#b9bcc6] rounded-t-[3px] bg-[#f5f8fd] tracking-[-0.4px] whitespace-nowrap">Start Page</div>
      {docTabs.map((t) => (
        <div key={t} className="w-[81px] pl-[3px] flex items-center border border-b-0 border-l-0 border-[#b9bcc6] rounded-t-[3px] bg-linear-to-b from-[#fafbfe] to-[#e6effa]">
          <Part /><span className="ml-[2px] tracking-[-0.2px] whitespace-nowrap">{t}</span>
        </div>
      ))}
      <div className="w-[84px] pl-[3px] flex items-center border border-b-0 border-[#c9a284] rounded-t-[3px] bg-linear-to-b from-[#fdd3ab] to-[#f9b070]">
        <Part /><span className="ml-[2px] font-bold tracking-[-0.5px] whitespace-nowrap">Column 7</span>
      </div>
      <div className="ml-auto flex items-center gap-[7px] pr-1.5">
        <svg className="w-3 h-[10px]" viewBox="0 0 12 10"><path d="M0 1.200h12" stroke="#333" strokeWidth="2" /><path d="M0 4h12l-6 6z" fill="#444" /></svg>
        <CloseX color="#333338" />
      </div>
    </div>
    <div className="relative h-[911px] shrink-0 border border-t-2 border-[#5a6580] bg-linear-to-b from-[#4b669d] via-[#98a3c1] to-[#e6e4e5]">
      <div className="absolute -left-px -top-0.5"><Scene /></div>
      <div className="absolute -left-px top-[405px] w-[6px] h-[79px] bg-[#dedde4] border-y border-r border-[#55555c]"><div className="ml-[2px] w-px h-full bg-[#55555c]" /></div>
      <div className="absolute -right-px top-[405px] w-[6px] h-[79px] bg-[#dedde4] border-y border-l border-[#55555c]"><div className="ml-[2px] w-px h-full bg-[#55555c]" /></div>
      <div className="absolute left-[639px] bottom-0 w-[79px] h-[5px] bg-[#e4e3ea] border-x border-t border-[#55555c]"><div className="mt-[2px] h-px w-full bg-[#55555c]" /></div>
      <div className="absolute right-0 top-[10px] flex flex-col w-[40px] gap-[7px]">
        {viewIcons.map((v, i) => (
          <div key={i} className="flex h-6 items-center gap-[4px]">{v.i}{v.a && <Arrow />}</div>
        ))}
      </div>
    </div>
  </div>
);

/* ---------- projects tree ---------- */

const RedPlus = () => (
  <svg className="w-[9px] h-[9px] shrink-0" viewBox="0 0 9 9"><path d="M3.500.5h2v3h3v2h-3v3h-2v-3h-3v-2h3z" fill="#fbd3a8" stroke="#bd4312" /></svg>
);

const Expander = () => (
  <svg className="w-[9px] h-[9px] shrink-0" viewBox="0 0 9 9"><rect x=".5" y=".5" width="8" height="8" fill="#fff" stroke="#8c8c90" /><path d="M2 4.500h5M4.500 2v5" stroke="#3c3c50" /></svg>
);

const Asm = <S16><path d="M0 3h3M4 3h2" stroke="#4b9bd2" strokeWidth="1.800" /><rect x="7" y="0" width="6" height="4" fill="#2fa9a4" /><path d="M9 5v3" stroke="#58a7dd" /><circle cx="10" cy="9" r="1.400" stroke="#3c8bc8" /><circle cx="8.500" cy="13" r="1.500" stroke="#3c8bc8" /><path d="M11 11l2 3" stroke="#3c8bc8" strokeWidth="1.500" /></S16>;

const tree: { n: string; ex?: boolean; i: React.ReactNode }[] = [
  { n: 'Templates', ex: true, i: <S16><path d="M1 1h14v14H1z" fill="#f7ecd8" stroke="#c9a27b" /><path d="M4 5h8M6 8l2 6M9 7h4v7H9z" stroke="#e9a468" fill="#fbd9ae" /><circle cx="3" cy="2.500" r="2.500" fill="#f7d03c" /></S16> },
  { n: 'Favorites', ex: true, i: <S16><rect x="1" y="1" width="14" height="14" fill="#e84c20" /><path d="M1 1h14v3L9 9 1 12z" fill="#f8b234" /><path d="M1 1h13L7 4 1 8z" fill="#fbe3cd" /><path d="M3 13l3-5 2 2 4-5 3 1-1 8z" fill="#d92e18" opacity=".6" /></S16> },
  { n: 'Recycle bin', ex: true, i: <S16><path d="M2 3h12l-2 12H4z" fill="#5b92ce" /><ellipse cx="8" cy="3" rx="6.500" ry="2.200" fill="#b9d4ee" stroke="#4c6f9b" /><path d="M6 7v6M10 7v6" stroke="#a6cdf0" /></S16> },
  { n: 'Assembly 1', i: Asm },
  { n: 'Column', i: <Part /> },
  { n: 'Column 2', i: <Part /> },
  { n: 'Column 3', i: <Part /> },
  { n: 'Column 4', i: <Part /> },
  { n: 'Column 5', i: <Part /> },
  { n: 'Column 6', i: <Part /> },
  { n: 'Column 7', i: <Part /> },
  { n: 'Department', i: <Part /> },
  { n: 'Department  - Copy', i: <Part /> },
  { n: 'Drafting 1', i: <S16><path d="M.5 1h15v10l-5 4.500H.5z" fill="#dbe2f6" stroke="#8693c5" /><path d="M4 3v9M8 2v11M2 6h11M2 10h9" stroke="#a8b5e0" /><path d="M10.500 15.500V11h5z" fill="#fff" stroke="#8693c5" /></S16> },
  { n: 'Exploded 1', i: Asm },
  { n: 'Part 1', i: <Part /> },
  { n: 'Strange part', i: <Part /> },
  { n: 'Temple', ex: true, i: <S16><path d="M9 2h7M14 0H9" stroke="#e89417" strokeWidth="1.500" /><path d="M8 5h8M12 3l4 2-4 3" stroke="#2230b0" strokeWidth="1.500" /><path d="M0 9h5v2H0z" fill="#2f78c8" /><path d="M5 9l3 2" stroke="#2f78c8" strokeWidth="2" /><path d="M8 11l5-2 2 3-5 2z" fill="#e8b63c" /></S16> },
  { n: 'window 1', i: <Part /> },
];

const RightPanel = () => (
  <div className="flex flex-col w-[196px] shrink-0 pt-0.5">
    <PanelHeader title="Projects" c="mr-[2px]" />
    <div className="flex h-[23px] shrink-0 items-center bg-[#f4f3f9] border-l border-[#85858c] pl-1">
      <PanelBtn />
      <S16 c="w-4 h-4 ml-[7px]"><path d="M1 0v16M1 2h3M1 8h3M1 14h3" stroke="#31408c" strokeDasharray="2 1" strokeWidth="1.300" /><path d="M6 4v3M6 9v3M6 14v2" stroke="#c03a3a" strokeWidth="2" /><path d="M15 4H9m3-3L8.500 4 12 7" stroke="#3fae2c" strokeWidth="1.800" /></S16>
      <S16 c="w-4 h-4 ml-1.5"><path d="M2 2h12v11" stroke="#aaa" strokeDasharray="1 1" /><path d="M8 4l6-1v8l-4 3z" fill="#e3d0a4" stroke="#a99a72" /><path d="M1 10l4 5M6 10l-5 5" stroke="#1c1c60" strokeWidth="1.800" /></S16>
      <div className="relative w-4 h-4 ml-2"><S16><path d="M1 1h6v9H1zM5 4h6v9H5z" stroke="#b0b4c0" fill="#f3f4f8" /></S16><span className="absolute left-[6px] top-[5px] text-[9px] leading-[10px] font-semibold text-[#3d83b4] tracking-[-0.4px]">12</span></div>
      <S16 c="w-4 h-4 ml-[7px]"><path d="M1 4c5-3 4 1 8-1s4-2 6-2M1 9c5-3 4 1 8-1s4-2 6-2M2 14c4-3 4 1 7-1s4-2 5-2" stroke="#5578bb" strokeWidth="2.200" /></S16>
      <div className={`${HOT} w-[22px] h-[22px] ml-[3px]`}><S16><path d="M1 3c3-2 5 1 8 0l3-1 3 8c-3 1-5-1-8 0L3 10z" fill="#d82a18" /><path d="M12 9l1 4" stroke="#8a3016" strokeWidth="1.500" /></S16></div>
      <S16 c="w-4 h-4 ml-1"><path d="M8 1l7.500 14H.5z" fill="#f6cf1e" stroke="#c99d0c" /><path d="M8 5v5M8 11.500v2" stroke="#222" strokeWidth="1.700" /></S16>
      <Arrow c="ml-px" />
      <div className={`${HOT} w-[22px] h-[22px] ml-[4px]`}><S16><path d="M16 4H3m3-3L2 4l4 3" stroke="#e79818" strokeWidth="1.700" /><path d="M0 11h13m-3-3l4 3-4 3" stroke="#2b2fa0" strokeWidth="1.700" /></S16></div>
    </div>
    <div className="h-[712px] shrink-0 relative border border-r-0 border-[#77777c] bg-white pt-px text-xs text-[#0e0e12]">
      <div className="absolute left-[12px] top-[18px] h-[352px] border-l border-dotted border-[#88888c]" />
      <div className="relative flex h-[18px] items-center pl-[7px]">
        <RedPlus />
        <S16 c="w-4 h-4 ml-1"><path d="M1 4l9-3 5 9-8 5z" fill="#3c7fd6" /><path d="M1 4l5-2 1 6-4 3z" fill="#9bd0f8" /><path d="M7 15l8-5v2l-6 4z" fill="#b9c4d4" /></S16>
        <span className="ml-[5px] tracking-[-0.15px]">Projects</span>
      </div>
      <div className="relative flex h-[18px] items-center pl-2">
        <Expander />
        <div className="w-[7px] border-t border-dotted border-[#88888c]" />
        <S16><circle cx="2" cy="9" r="1.800" stroke="#3a4690" /><circle cx="7" cy="9" r="1.800" stroke="#3a4690" /><path d="M8 1h4v4H8zM12 5h4v4h-4zM9 11h4v4H9z" fill="#9cc26b" stroke="#557a35" strokeWidth=".7" /></S16>
        <span className="ml-[4px] tracking-[-0.4px]">References</span>
      </div>
      {tree.map((t) => (
        <div key={t.n} className="relative flex h-[18px] items-center pl-2">
          {t.ex ? <Expander /> : <div className="w-[9px]" />}
          <div className={`${t.ex ? 'w-[7px]' : 'w-3 -ml-[5px]'} border-t border-dotted border-[#88888c]`} />
          <div className="ml-[2px] flex"><RedPlus /></div>
          <div className="ml-1">{t.i}</div>
          <span className={`ml-[4px] px-px leading-4 whitespace-pre tracking-[-0.23px] ${t.n === 'Column 7' ? 'bg-[#0078d7] text-white outline-1 outline-dotted outline-[#12304a]' : ''}`}>{t.n}</span>
        </div>
      ))}
    </div>
    <div className="mt-1 h-[173px] shrink-0 border-t-2 border-l border-b border-[#5a6580] bg-linear-to-b from-[#4b669d] via-[#98a3c1] to-[#e2e1e6] flex justify-center pt-[9px]">
      <svg className="w-[10px] h-[154px] ml-[2px]" viewBox="0 0 10 154">
        <path d="M0 0h10v3H0z" fill="#5c6266" /><path d="M.5 3h9v149h-9z" fill="#999994" stroke="#6b6d70" /><path d="M3 4v147" stroke="#7a7a76" /><path d="M5 4v147" stroke="#b8b8b0" strokeWidth="1.500" />
      </svg>
    </div>
  </div>
);

/* ---------- status + taskbar ---------- */

const StatusBar = () => (
  <div className="flex h-[25px] shrink-0 items-center bg-[#e5e4eb] text-xs leading-4 text-[#16161a] pt-[3px] whitespace-nowrap">
    <span className="w-[985px] ml-1 tracking-[-0.1px]">Ready.</span>
    <span className="w-[75px] tracking-[-0.3px]">X=+095.346</span>
    <span className="w-[75px] tracking-[-0.3px]">Y=+000.000</span>
    <span className="w-[91px] tracking-[-0.3px]">Z=+424.560</span>
    <div className="w-[46px] -mt-[2px]"><Layer color="#6fa6e6" light="#c3def8" /></div>
    <span className="tracking-[-0.36px]">Visualization: 0.2mm 15°</span>
  </div>
);

const Office = ({ l, bg, c, children }: { l: string; bg: string; c?: string; children?: React.ReactNode }) => (
  <div className="relative w-6 h-6">
    <Svg>
      <path d="M13 3h10v18H13z" fill="#fff" />
      <path d="M14 6h7M14 9h7M14 12h7M14 15h7M14 18h7" stroke={bg} strokeWidth="1.300" />
      {children}
      <path d="M1 3l13-2.500v23L1 21z" fill={bg} />
    </Svg>
    <span className={`absolute left-[3px] top-[4px] text-[12px] leading-4 font-bold text-white ${c ?? ''}`}>{l}</span>
  </div>
);

const taskIcons: React.ReactNode[] = [
  <Svg c="w-4 h-4" vb="0 0 16 16"><path d="M0 2.300l6.600-.9v6.200H0zM7.400 1.200L16 0v7.600H7.400zM0 8.400h6.600v6.200L0 13.700zM7.400 8.400H16V16l-8.600-1.200z" fill="#fff" /></Svg>,
  <Svg c="w-4 h-4" vb="0 0 16 16"><circle cx="10" cy="5.500" r="5" stroke="#fff" strokeWidth="1.400" /><path d="M6.500 9L.5 15.500" stroke="#fff" strokeWidth="1.500" /></Svg>,
  <Svg c="w-[17px] h-4" vb="0 0 17 16"><path d="M.7 0v3h10V0M.7 5h10v6H.7zM.7 16v-3h10v3M15 0v3M15 8v8" stroke="#fff" strokeWidth="1.300" /><path d="M14 4h2.500v2.500H14z" fill="#fff" /></Svg>,
  <Svg c="w-[22px] h-5" vb="0 0 22 20"><path d="M0 1h8l2 2h11v16H0z" fill="#f3ce6a" /><path d="M0 6h22v12H0z" fill="#fbe3a0" /><path d="M4 19v-7h14v7h-4v-3H8v3z" fill="#2f9de0" /></Svg>,
  <Svg c="w-[18px] h-[22px]" vb="0 0 18 22"><path d="M0 1h13v18H0z" fill="#f6d77f" /><path d="M0 1l5 3v17l-5-2z" fill="#fdeab4" /><path d="M9 10h5v5h4l-6.500 7L5 15h4z" fill="#2b83cf" /></Svg>,
  <Svg c="w-[18px] h-6" vb="0 0 18 24"><rect width="18" height="24" fill="#fff" /><rect x="2" y="2" width="14" height="4" fill="#2e2e2e" /><path d="M3 10h3M8 10h3M13 10h3M3 14h3M8 14h3M13 14h3M3 18h3M8 18h3M13 18h3M3 22h3M8 22h3M13 22h3" stroke="#2e2e2e" strokeWidth="2" /></Svg>,
  <Svg c="w-[22px] h-[22px]" vb="0 0 22 22"><path d="M0 10C1 3 6 0 11 0c7 0 11 4 11 10v3H8c0 5 7 7 12 4v4c-7 3-16 1-16-7 0-4 2-6 5-7-1 1-2 2-1.500 3H15c0-6-9-7-15 0z" fill="#1b86dd" /></Svg>,
  <Svg c="w-[22px] h-[22px]" vb="0 0 22 22"><circle cx="11" cy="11" r="11" fill="#f3c52f" /><path d="M1.500 5.500A11 11 0 0 1 20.500 5.500H11L7 13z" fill="#dc4335" /><path d="M1.500 5.500A11 11 0 0 0 10 22l5.500-9-4 3-5-3z" fill="#2fa04f" /><circle cx="11" cy="11" r="5" fill="#fff" /><circle cx="11" cy="11" r="4" fill="#3c7ee8" /></Svg>,
  <div className="relative w-6 h-6">
    <Svg><path d="M0 8l12-7 12 7v12H0z" fill="#fff" /><path d="M0 8l12 5 12-5-12 9z" fill="#333" /></Svg>
    <span className="absolute left-[16px] top-[9px] w-4 h-4 rounded-full border border-[#aaa] bg-[#333] text-white text-[11px] leading-[14px] font-semibold text-center">1</span>
  </div>,
  <Svg c="w-[18px] h-[18px]" vb="0 0 18 18"><path d="M0 0h18v11l-7 7H0z" fill="#fbe60c" /><path d="M9 10h9l-9 8z" fill="#222" /></Svg>,
  <Svg c="w-5 h-5" vb="0 0 20 20"><circle cx="10" cy="10" r="5.500" stroke="#fff" strokeWidth="3" /><path d="M10 0v4M10 16v4M0 10h4M16 10h4M3 3l3 3M14 14l3 3M17 3l-3 3M3 17l3-3" stroke="#fff" strokeWidth="3" /></Svg>,
  <Svg c="w-6 h-6"><path d="M0 6h24v16l-1 1H0z" fill="#fff" /><path d="M7 9V4c0-5 9-5 9 0v4" stroke="#ddd" strokeWidth="1.500" /><path d="M6 9h5v5H6z" fill="#e0502a" /><path d="M12.500 9h5v5h-5z" fill="#7cb62e" /><path d="M6 15.500h5v5H6z" fill="#2a9fe0" /><path d="M12.500 15.500h5v5h-5z" fill="#f3b82a" /></Svg>,
  <Svg c="w-[22px] h-[22px]" vb="0 0 22 22"><rect width="22" height="22" fill="#c00c0c" /><path d="M4 17c4-2 7-8 6-13 0 6 4 9 8 9-5-.5-10 1-14 4z" stroke="#fff" strokeWidth="1.300" /></Svg>,
  <Svg c="w-[22px] h-[22px]" vb="0 0 22 22"><circle cx="11" cy="11" r="10" fill="#fbf6fb" stroke="#b074d8" strokeWidth="1.800" /><path d="M8 15V6l7-1.500V13" stroke="#c9408c" strokeWidth="1.700" /><ellipse cx="6.700" cy="15" rx="2" ry="1.600" fill="#3e8ce0" /><ellipse cx="13.500" cy="13.500" rx="2" ry="1.600" fill="#e04474" /></Svg>,
  <Svg c="w-6 h-6"><rect width="24" height="24" fill="#04222c" /><rect x="5" y="5" width="14" height="14" rx="2" stroke="#2c7480" /><circle cx="12" cy="12" r="4" stroke="#3a8a94" /><path d="M10.500 14v-4l3 4v-4" stroke="#3a8a94" /></Svg>,
  <TopSolid c="w-6 h-6" />,
  <div className="w-6 h-6 bg-linear-to-b from-[#dce9f6] to-[#f6f9fc] text-[#2a5f9e] text-[22px] leading-6 font-extrabold text-center">R</div>,
  <div className="w-6 h-6 bg-linear-to-b from-[#fdf1ef] to-[#f6e2df] text-[#b0302b] text-[22px] leading-6 font-extrabold text-center">A</div>,
  <Office l="A" bg="#a4373a" />,
  <Office l="P" bg="#d24726" />,
  <Office l="X" bg="#1f7244" />,
  <Office l="W" bg="#2a5699" c="text-[10px]" />,
  <Office l="N" bg="#80397b" />,
  <Office l="N" bg="#80397b"><path d="M14 4l9 13M23 4l-8 13" stroke="#fff" strokeWidth="2.500" /></Office>,
];

const Taskbar = () => (
  <div className="flex h-9 shrink-0 items-center bg-linear-to-r from-[#04121a] from-8% via-[#353535] via-20% to-[#07130c] to-85% text-white">
    {taskIcons.map((ic, i) => (
      <div
        key={i}
        className={`h-9 shrink-0 flex items-center justify-center pt-1 ${i < 3 ? 'w-12' : 'w-[49px]'} ${i === 2 ? 'mr-[2px]' : ''} ${i === 15 ? 'bg-[#5a5a5b] border-r-2 border-[#474747]' : ''}`}
      >
        {ic}
      </div>
    ))}
    <div className="ml-auto flex items-center h-full text-xs pt-[3px]">
      <Svg c="w-4 h-4" vb="0 0 16 16"><circle cx="11" cy="3" r="2.500" stroke="#fff" /><circle cx="5" cy="8" r="2.500" stroke="#fff" /><path d="M8 9c1-3 6-3 7 1M1 15c0-5 8-5 8 0" stroke="#fff" /></Svg>
      <Svg c="w-3 h-[7px] ml-[22px]" vb="0 0 12 7"><path d="M.5 6.500L6 1l5.500 5.500" stroke="#fff" strokeWidth="1.300" /></Svg>
      <Svg c="w-4 h-3 ml-[10px]" vb="0 0 16 12"><rect x="5.500" y="3.500" width="9" height="7" stroke="#fff" /><path d="M6.500 5h6v4.500h-6zM15 5.500h1v3h-1zM0 3h5v2L2.500 7 0 5zM1 0v3M4 0v3M2.500 7v3.500H6" fill="#fff" stroke="#fff" strokeWidth=".7" /></Svg>
      <Svg c="w-[13px] h-[13px] ml-[10px]" vb="0 0 13 13"><path d="M.5 13C0 6 5 .5 12.500.5M4 13c0-5 3-9 8.500-9M7.500 13c0-3 1.500-5.500 5-5.500" stroke="#ddd" strokeWidth="1.200" /><circle cx="11.500" cy="11.500" r="1.500" fill="#fff" /></Svg>
      <Svg c="w-[17px] h-[13px] ml-2" vb="0 0 17 13"><path d="M.5 4.500h3l4-3.500v11l-4-3.500h-3zM10 4.500c1 1 1 3 0 4M12 2.500c2.500 2 2.500 6 0 8M14 .8c3.500 3 3.500 8.500 0 11.500" stroke="#fff" /></Svg>
      <span className="ml-[9px] w-[23px] tracking-[-0.6px]">ENG</span>
      <div className="ml-3 w-[55px] text-center leading-[18px] tracking-[-0.3px] whitespace-nowrap">
        <div>10:55 AM</div>
        <div>20-Oct-18</div>
      </div>
      <div className="relative ml-[17px] mr-[14px] w-6 h-5">
        <svg className="w-4 h-4" viewBox="0 0 16 16"><path d="M0 0h16v13h-3v3l-4-3H0z" fill="#fff" /><path d="M3 3.500h10M3 6.500h10M3 9.500h7" stroke="#111" strokeWidth="1.200" /></svg>
        <span className="absolute left-2 top-[7px] w-[15px] h-[15px] rounded-full border border-[#888] bg-[#333] text-[10px] leading-[13px] font-bold text-center">5</span>
      </div>
    </div>
  </div>
);

export default function App() {
  return (
    <div className="flex flex-col w-[1916px] h-[1076px] overflow-hidden bg-[#e4e3ea] font-['Open_Sans',sans-serif]">
      <TitleBar />
      <Ribbon />
      <Toolbar />
      <div className="flex h-[932px] shrink-0">
        <LeftPanel />
        <div className="w-[3px] shrink-0" />
        <Viewport />
        <div className="w-[3px] shrink-0" />
        <RightPanel />
      </div>
      <StatusBar />
      <Taskbar />
    </div>
  );
}
